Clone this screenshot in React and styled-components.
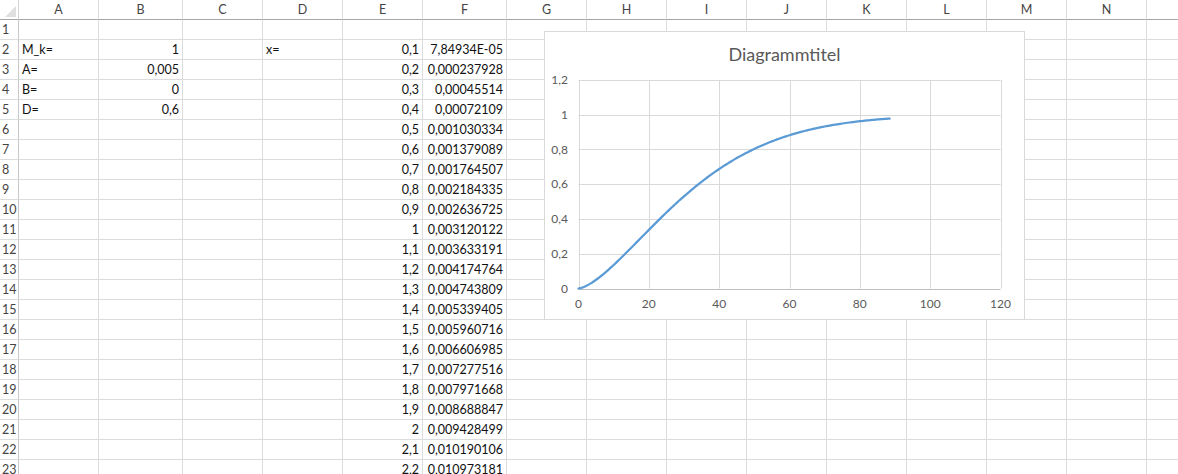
import styled, { createGlobalStyle } from 'styled-components'

const GlobalStyle = createGlobalStyle`
    html, body {
        margin: 0;
        padding: 0;
        background: #fff;
        overflow: hidden;
    }
    body {
        font-family: Lato, "Liberation Sans", sans-serif;
    }
`

// column letters with their widths (border included); the last one runs off the edge
const columns = [
    ['A', 80], ['B', 84], ['C', 80], ['D', 80], ['E', 80], ['F', 84],
    ['G', 80], ['H', 80], ['I', 80], ['J', 80], ['K', 80], ['L', 80],
    ['M', 80], ['N', 80], ['', 80],
]

const params = {
    2: { A: 'M_k=', B: '1', D: 'x=' },
    3: { A: 'A=', B: '0,005' },
    4: { A: 'B=', B: '0' },
    5: { A: 'D=', B: '0,6' },
}

const series = [
    ['0,1', '7,84934E-05'], ['0,2', '0,000237928'], ['0,3', '0,00045514'],
    ['0,4', '0,00072109'], ['0,5', '0,001030334'], ['0,6', '0,001379089'],
    ['0,7', '0,001764507'], ['0,8', '0,002184335'], ['0,9', '0,002636725'],
    ['1', '0,003120122'], ['1,1', '0,003633191'], ['1,2', '0,004174764'],
    ['1,3', '0,004743809'], ['1,4', '0,005339405'], ['1,5', '0,005960716'],
    ['1,6', '0,006606985'], ['1,7', '0,007277516'], ['1,8', '0,007971668'],
    ['1,9', '0,008688847'], ['2', '0,009428499'], ['2,1', '0,010190106'],
    ['2,2', '0,010973181'],
]

const ROW_COUNT = 23

const cellValue = (row, col) => {
    const p = params[row]
    if (p && p[col]) return p[col]
    const s = series[row - 2]
    if (s && col === 'E') return s[0]
    if (s && col === 'F') return s[1]
    return ''
}

const isText = (v) => /[=_]/.test(v)

// chart geometry (inside the chart border)
const plot = { left: 33.5, right: 455.5, top: 48, bottom: 256.5 }
const sx = (x) => plot.left + (x / 120) * (plot.right - plot.left)
const sy = (y) => plot.bottom - (y / 1.2) * (plot.bottom - plot.top)

const curve = () => {
    const pts = []
    for (let x = 0; x <= 88.6; x += 0.5) {
        const y = 1 - Math.exp(-0.0046 * Math.pow(x, 1.5))
        pts.push(`${sx(x).toFixed(2)},${sy(y).toFixed(2)}`)
    }
    return 'M' + pts.join(' L')
}

const Chart = () => {
    const yTicks = [0, 0.2, 0.4, 0.6, 0.8, 1, 1.2]
    const xTicks = [0, 20, 40, 60, 80, 100, 120]
    return (
        <ChartBox>
            <svg width="479" height="287">
                <ChartTitle x="239.5" y="29">Diagrammtitel</ChartTitle>
                {yTicks.map((t) => (
                    <g key={t}>
                        <line x1={plot.left} x2={plot.right} y1={Math.round(sy(t)) + 0.5} y2={Math.round(sy(t)) + 0.5}
                            stroke={t === 0 ? '#bfbfbf' : '#d9d9d9'} strokeWidth="1" />
                        <AxisLabel x="23" y={sy(t) + 4} textAnchor="end">
                            {String(t).replace('.', ',')}
                        </AxisLabel>
                    </g>
                ))}
                {xTicks.map((t) => (
                    <g key={t}>
                        <line x1={Math.round(sx(t)) + 0.5} x2={Math.round(sx(t)) + 0.5} y1={plot.top} y2={plot.bottom}
                            stroke="#d9d9d9" strokeWidth="1" />
                        <AxisLabel x={sx(t)} y="276" textAnchor="middle">{t}</AxisLabel>
                    </g>
                ))}
                <path d={curve()} fill="none" stroke="#5b9bd5" strokeWidth="2.25" strokeLinecap="round" />
            </svg>
        </ChartBox>
    )
}

const App = () => {
    const rows = Array.from({ length: ROW_COUNT }, (_, i) => i + 1)
    return (
        <>
            <GlobalStyle />
            <Sheet>
                <Grid>
                    <Corner />
                    {columns.map(([name], i) => (
                        <ColHead key={i}>{name}</ColHead>
                    ))}
                    {rows.map((r) => [
                        <RowHead key={`h${r}`}>{r}</RowHead>,
                        ...columns.map(([name], i) => {
                            const v = cellValue(r, name)
                            return (
                                <Cell key={`${i}-${r}`} $left={isText(v)}>{v}</Cell>
                            )
                        }),
                    ])}
                </Grid>
                <Chart />
            </Sheet>
        </>
    )
}

export default App

//styles
const Sheet = styled.div`
    position: relative;
    width: 1178px;
    height: 474px;
    overflow: hidden;
    background: #fff;
`
const Grid = styled.div`
    display: grid;
    grid-template-columns: 19px ${columns.map(([, w]) => `${w}px`).join(' ')};
    grid-auto-rows: 20px;
    font-size: 12.5px;
    color: #111;
`
const Corner = styled.div`
    position: relative;
    box-sizing: border-box;
    border-right: 1px solid #d4d4d4;
    border-bottom: 1px solid #a6a6a6;

    &:after {
        content: '';
        position: absolute;
        right: 2px;
        bottom: 2px;
        border-style: solid;
        border-width: 0 0 11px 11px;
        border-color: transparent transparent #dfdfdf transparent;
    }
`
const ColHead = styled.div`
    box-sizing: border-box;
    border-right: 1px solid #dadcdd;
    border-bottom: 1px solid #a6a6a6;
    text-align: center;
    line-height: 19px;
    color: #444;
`
const RowHead = styled.div`
    box-sizing: border-box;
    border-right: 1px solid #c8c8c8;
    border-bottom: 1px solid #dadcdd;
    padding-left: 2px;
    line-height: 20px;
    color: #444;
    overflow: hidden;
`
const Cell = styled.div`
    box-sizing: border-box;
    border-right: 1px solid #dadcdd;
    border-bottom: 1px solid #dadcdd;
    padding: 0 3px;
    line-height: 20px;
    white-space: nowrap;
    overflow: hidden;
    text-align: ${(p) => (p.$left ? 'left' : 'right')};
`
const ChartBox = styled.div`
    position: absolute;
    left: 544px;
    top: 31px;
    width: 481px;
    height: 289px;
    box-sizing: border-box;
    border: 1px solid #d9d9d9;
    background: #fff;

    svg {
        display: block;
    }
`
const ChartTitle = styled.text`
    font-family: Lato, "Liberation Sans", sans-serif;
    font-size: 18px;
    font-weight: 400;
    fill: #595959;
    text-anchor: middle;
`
const AxisLabel = styled.text`
    font-family: Lato, "Liberation Sans", sans-serif;
    font-size: 12px;
    fill: #595959;
`
